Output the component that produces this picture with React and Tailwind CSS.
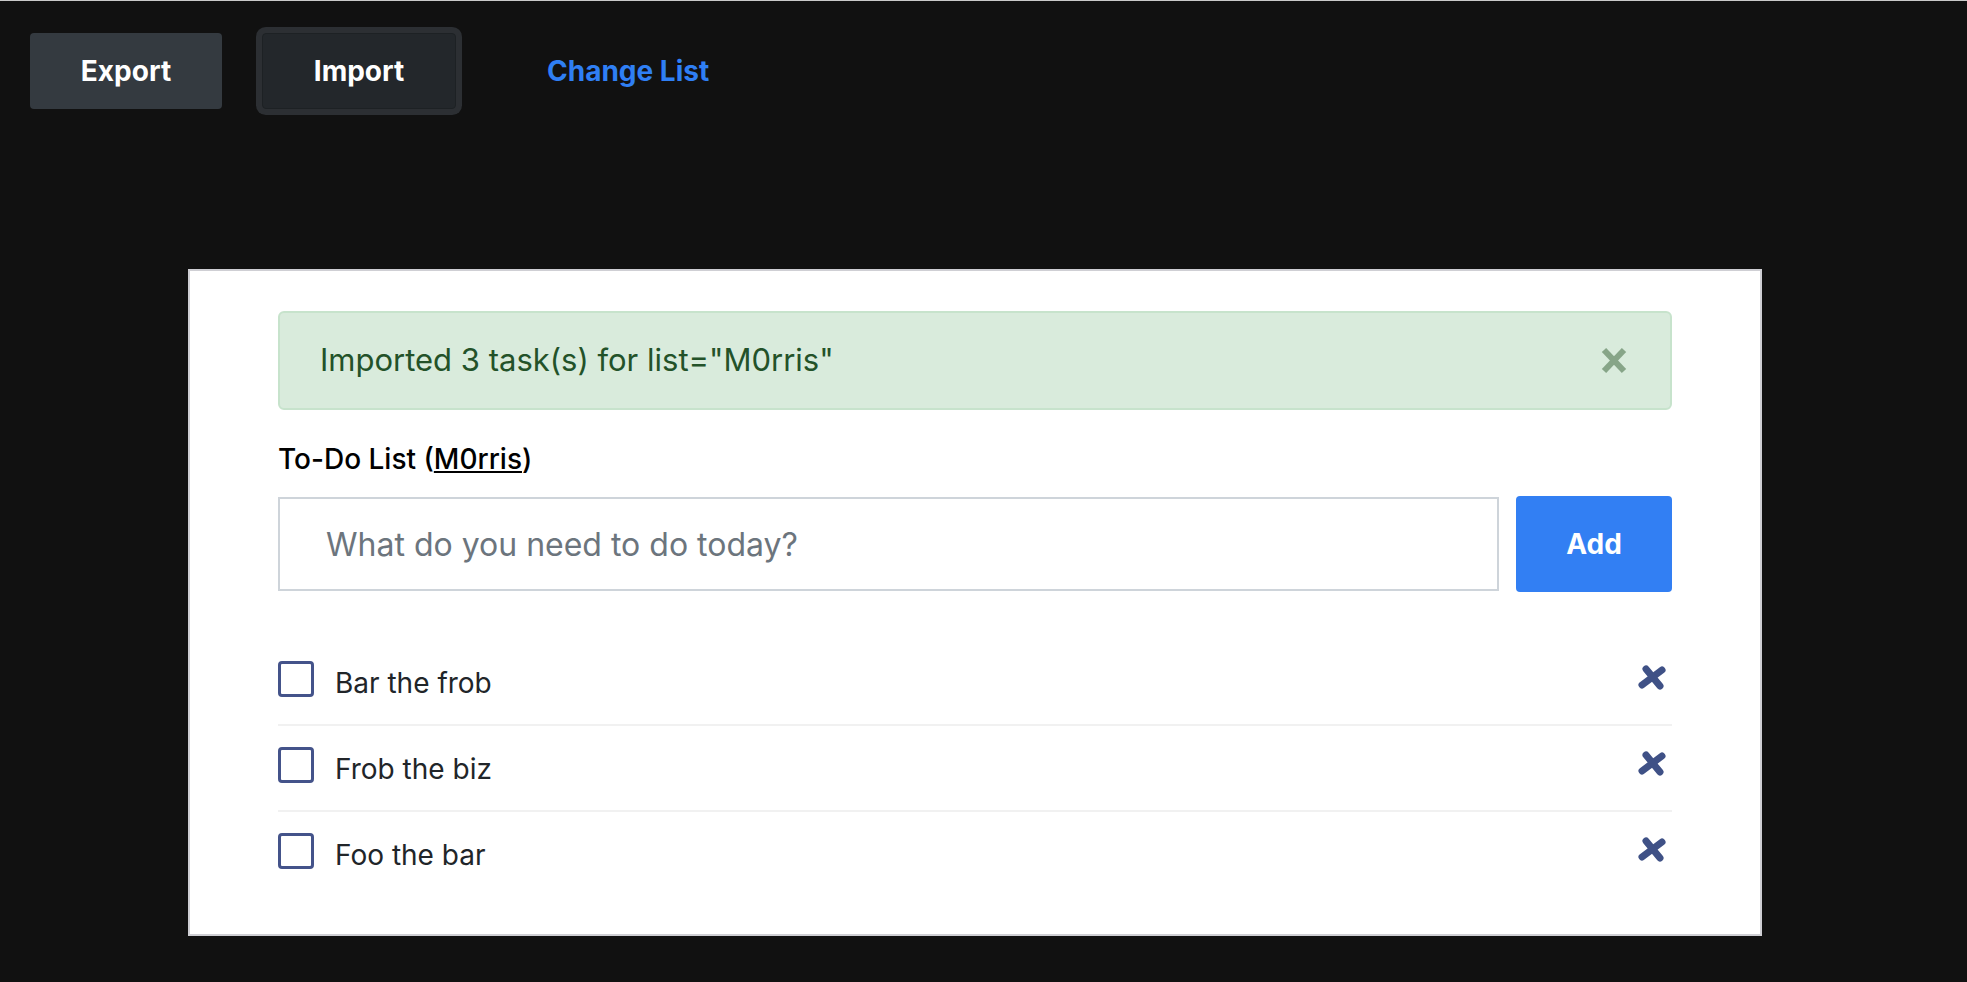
import { useState } from 'react';

const tasks = ['Bar the frob', 'Frob the biz', 'Foo the bar'];

// heavy rounded cross used for deleting a task
const DeleteIcon = () => (
  <svg width="28" height="25" viewBox="0 0 28 25" className="overflow-visible mt-[4px]">
    <line x1="4" y1="20" x2="24" y2="5" stroke="#3f5186" strokeWidth="7" strokeLinecap="round" />
    <line x1="8" y1="4" x2="22" y2="21" stroke="#3f5186" strokeWidth="7" strokeLinecap="round" />
  </svg>
);

const CloseIcon = () => (
  <svg width="24" height="25" viewBox="0 0 24 25" className="overflow-visible">
    <line x1="2" y1="2" x2="22" y2="23" stroke="#87a588" strokeWidth="6" />
    <line x1="22" y1="2" x2="2" y2="23" stroke="#87a588" strokeWidth="6" />
  </svg>
);

export default function App() {
  const [text, setText] = useState('');

  return (
    <div className="min-h-screen bg-[#111111] border-t border-[#c9c9c9] font-['Inter',sans-serif]">
      {/* Top buttons */}
      <nav className="flex items-center gap-[40px] pl-[30px] pt-[32px]">
        <button className="w-[192px] h-[76px] flex items-center justify-center rounded-[4px] bg-[#343a40] text-white text-[28px] font-bold">
          Export
        </button>
        <button className="w-[194px] h-[76px] flex items-center justify-center rounded-[4px] bg-[#23272b] border border-[#1d2124] shadow-[0_0_0_6px_#2c2f33] text-white text-[28px] font-bold">
          Import
        </button>
        <button className="h-[76px] px-[51px] flex items-center text-[#2f7ff4] text-[28px] font-bold">
          Change List
        </button>
      </nav>

      {/* Card */}
      <div className="mt-[160px] ml-[188px] w-[1574px] bg-white border-2 border-[#cfcfd4] pt-[40px] px-[88px] pb-[38px]">
        <div className="h-[99px] flex items-center justify-between rounded-[6px] bg-[#d9ebdc] border-2 border-[#c7e3cc] pl-[40px] pr-[44px]">
          <span className="text-[31px] text-[#235229]">Imported 3 task(s) for list="M0rris"</span>
          <CloseIcon />
        </div>

        <div className="mt-[32px] text-[28px] leading-[34px] font-medium text-black">
          To-Do List (<span className="underline">M0rris</span>)
        </div>

        <div className="mt-[20px] flex items-center gap-[17px]">
          <input
            value={text}
            onChange={(e) => setText(e.target.value)}
            placeholder="What do you need to do today?"
            className="flex-1 h-[94px] border-2 border-[#ced4da] pl-[46px] text-[32px] text-[#495057] placeholder:text-[#6c757d] outline-none"
          />
          <button className="w-[156px] h-[96px] rounded-[4px] bg-[#327ff3] text-white text-[28px] font-bold">
            Add
          </button>
        </div>

        <ul className="mt-[48px]">
          {tasks.map((t, i) => (
            <li
              key={t}
              className={`flex items-start pt-[21px] pr-[6px] ${i < tasks.length - 1 ? 'h-[86px] border-b-2 border-[#f1f1f1]' : 'h-[84px]'}`}
            >
              <span className="w-[36px] h-[36px] rounded-[4px] border-[3px] border-[#44538a]" />
              <span className="ml-[21px] mt-[4px] flex-1 text-[28px] leading-[36px] text-[#212529]">{t}</span>
              <DeleteIcon />
            </li>
          ))}
        </ul>
      </div>
    </div>
  );
}
